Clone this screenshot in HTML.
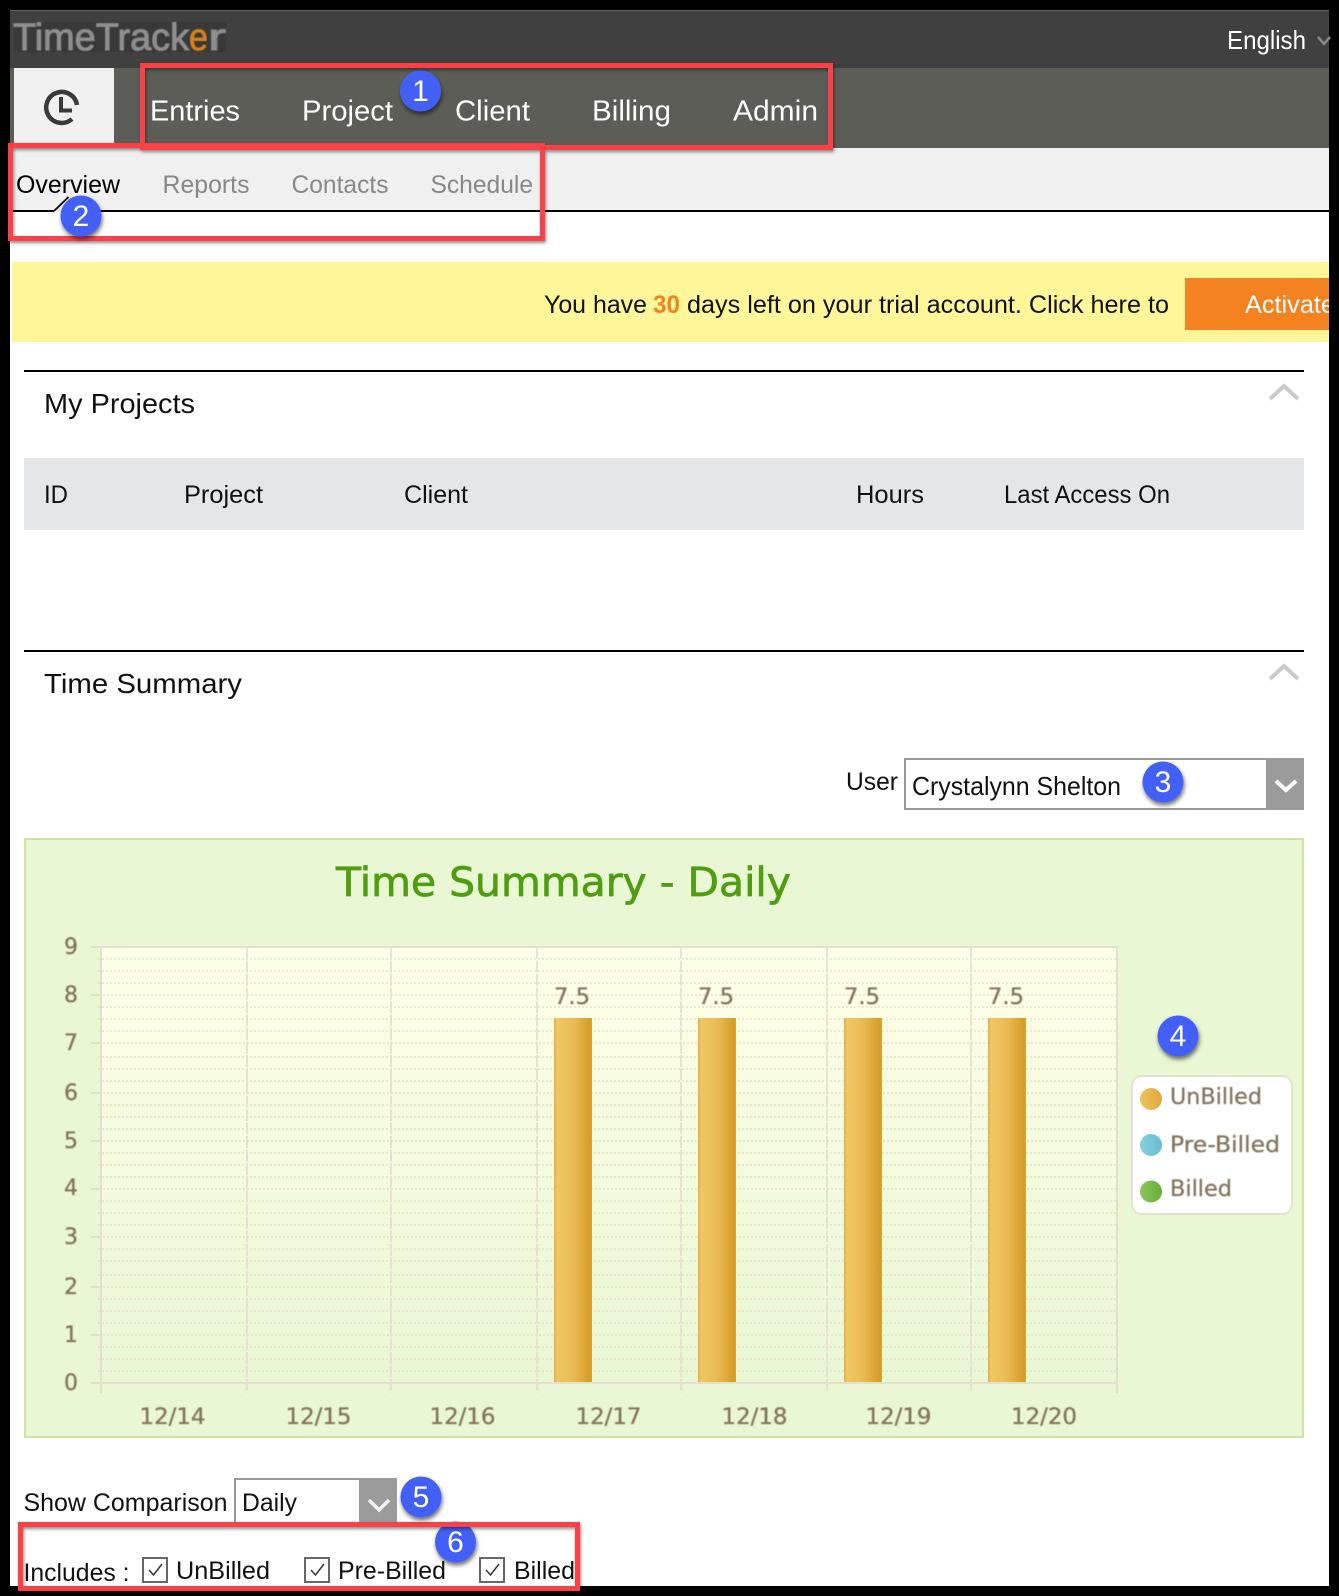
<!DOCTYPE html>
<html>
<head>
<meta charset="utf-8">
<title>TimeTracker</title>
<style>
html,body{margin:0;padding:0;background:#000;width:1339px;height:1596px;overflow:hidden}
svg{display:block}
text{font-family:"Liberation Sans",sans-serif}
.d{font-family:"DejaVu Sans",sans-serif}
.c{fill:#84755b;font-size:22px}
.b{fill:#fff;font-size:30px;text-anchor:middle}
</style>
</head>
<body>
<svg xmlns="http://www.w3.org/2000/svg" width="1339" height="1596" viewBox="0 0 1339 1596">
<defs>
<linearGradient id="plot" x1="0" y1="0" x2="0" y2="1"><stop offset="0" stop-color="#ffffe8"/><stop offset="1" stop-color="#e9f7d4"/></linearGradient>
<linearGradient id="bar" x1="0" y1="0" x2="1" y2="0"><stop offset="0" stop-color="#e2b03c"/><stop offset=".08" stop-color="#f0c765"/><stop offset=".5" stop-color="#ecbc54"/><stop offset=".95" stop-color="#d59c28"/><stop offset="1" stop-color="#dca730"/></linearGradient>
<linearGradient id="l1" x1="0" y1="0" x2="1" y2="0"><stop offset="0" stop-color="#eec25f"/><stop offset="1" stop-color="#dfa83a"/></linearGradient>
<linearGradient id="l2" x1="0" y1="0" x2="1" y2="0"><stop offset="0" stop-color="#84d0e0"/><stop offset="1" stop-color="#6cbcd4"/></linearGradient>
<linearGradient id="l3" x1="0" y1="0" x2="1" y2="0"><stop offset="0" stop-color="#8cc65c"/><stop offset="1" stop-color="#66ae38"/></linearGradient>
<filter id="sh" x="-30%" y="-30%" width="160%" height="170%"><feDropShadow dx="1" dy="3" stdDeviation="2" flood-color="#000" flood-opacity=".55"/></filter>
<filter id="rs" x="-5%" y="-10%" width="110%" height="125%"><feDropShadow dx="1" dy="2" stdDeviation="1.500" flood-color="#000" flood-opacity=".45"/></filter>
<filter id="bl"><feGaussianBlur stdDeviation=".5"/></filter>
<clipPath id="pg"><rect x="10" y="10" width="1319" height="1576"/></clipPath>
</defs>

<rect width="1339" height="1596" fill="#000"/>
<rect x="10" y="10" width="1319" height="1576" fill="#fff"/>

<!-- header -->
<rect x="10" y="10" width="1319" height="58" fill="#404040"/>
<rect x="10" y="10" width="1319" height="1" fill="#666"/>
<rect x="14" y="22" width="212" height="30" fill="#393939"/>
<g filter="url(#bl)">
<text x="13" y="50" font-size="38" fill="#8e8e8e" stroke="#8e8e8e" stroke-width="1" textLength="176" lengthAdjust="spacingAndGlyphs">TimeTrack</text>
<text x="189" y="50" font-size="38" fill="#d9811f" stroke="#d9811f" stroke-width=".8" textLength="19" lengthAdjust="spacingAndGlyphs">e</text>
<text x="208" y="50" font-size="38" fill="#8e8e8e" stroke="#8e8e8e" stroke-width="1" textLength="18" lengthAdjust="spacingAndGlyphs">r</text>
</g>
<text x="1227" y="49" font-size="26" fill="#fff" textLength="79" lengthAdjust="spacingAndGlyphs">English</text>
<polyline points="1318,37 1324,44 1330,37" fill="none" stroke="#8a8a8a" stroke-width="2.500"/>

<!-- nav -->
<rect x="10" y="68" width="1319" height="80" fill="#5c5d57"/>
<rect x="14" y="68" width="100" height="80" fill="#f0f0f0"/>
<path d="M77 105A15.500 15.500 0 1 0 72 119" fill="none" stroke="#3a3a3a" stroke-width="4.500"/>
<path d="M61 97V110.500H72" fill="none" stroke="#3a3a3a" stroke-width="4"/>
<g font-size="29" fill="#fff">
<text x="150" y="120.500" textLength="90" lengthAdjust="spacingAndGlyphs">Entries</text>
<text x="302" y="120.500" textLength="91" lengthAdjust="spacingAndGlyphs">Project</text>
<text x="455" y="120.500" textLength="75" lengthAdjust="spacingAndGlyphs">Client</text>
<text x="592" y="120.500" textLength="79" lengthAdjust="spacingAndGlyphs">Billing</text>
<text x="733" y="120.500" textLength="85" lengthAdjust="spacingAndGlyphs">Admin</text>
</g>

<!-- subnav -->
<rect x="10" y="148" width="1319" height="63" fill="#f0f0f0"/>
<rect x="10" y="210" width="1319" height="2" fill="#000"/>
<rect x="68" y="196" width="30" height="16" fill="#f0f0f0"/>
<rect x="54" y="210" width="16" height="2" fill="#f0f0f0"/>
<path d="M54 211L68.500 197" stroke="#000" stroke-width="1.800" fill="none"/>
<g font-size="25" fill="#888">
<text x="16" y="193" fill="#000" textLength="104" lengthAdjust="spacingAndGlyphs">Overview</text>
<text x="162.500" y="193" textLength="87" lengthAdjust="spacingAndGlyphs">Reports</text>
<text x="291.500" y="193" textLength="97" lengthAdjust="spacingAndGlyphs">Contacts</text>
<text x="430.500" y="193" textLength="102.500" lengthAdjust="spacingAndGlyphs">Schedule</text>
</g>

<!-- trial banner -->
<rect x="12" y="262" width="1317" height="80" fill="#fff599"/>
<rect x="1185" y="278" width="144" height="52" fill="#f58220"/>
<g font-size="25" fill="#111">
<text x="544" y="313" textLength="103" lengthAdjust="spacingAndGlyphs">You have</text>
<text x="653" y="313" fill="#f58220" font-weight="bold" textLength="27" lengthAdjust="spacingAndGlyphs">30</text>
<text x="687" y="313" textLength="482" lengthAdjust="spacingAndGlyphs">days left on your trial account. Click here to</text>
</g>
<text x="1245" y="313" font-size="25" fill="#fff" textLength="90" lengthAdjust="spacingAndGlyphs" clip-path="url(#pg)">Activate</text>

<!-- My projects -->
<rect x="24" y="370" width="1280" height="2" fill="#000"/>
<text x="44" y="413" font-size="28" fill="#111" textLength="151" lengthAdjust="spacingAndGlyphs">My Projects</text>
<polyline points="1270,399 1284,386 1298,399" fill="none" stroke="#cacaca" stroke-width="4"/>
<rect x="24" y="458" width="1280" height="72" fill="#e5e6e8"/>
<g font-size="25" fill="#111">
<text x="44" y="503" textLength="24" lengthAdjust="spacingAndGlyphs">ID</text>
<text x="184" y="503" textLength="79" lengthAdjust="spacingAndGlyphs">Project</text>
<text x="404" y="503" textLength="64" lengthAdjust="spacingAndGlyphs">Client</text>
<text x="856" y="503" textLength="68" lengthAdjust="spacingAndGlyphs">Hours</text>
<text x="1004" y="503" textLength="166" lengthAdjust="spacingAndGlyphs">Last Access On</text>
</g>

<!-- Time summary -->
<rect x="24" y="650" width="1280" height="2" fill="#000"/>
<text x="44" y="693" font-size="28" fill="#111" textLength="198" lengthAdjust="spacingAndGlyphs">Time Summary</text>
<polyline points="1270,679 1284,666 1298,679" fill="none" stroke="#cacaca" stroke-width="4"/>

<text x="846" y="790" font-size="25" fill="#111" textLength="52" lengthAdjust="spacingAndGlyphs">User</text>
<rect x="905" y="759" width="398" height="50" fill="#fff" stroke="#999" stroke-width="2"/>
<rect x="1266" y="758" width="38" height="52" fill="#9b9b9b"/>
<polyline points="1276,781 1286,790 1296,781" fill="none" stroke="#fff" stroke-width="4"/>
<text x="912" y="795" font-size="26" fill="#111" textLength="209" lengthAdjust="spacingAndGlyphs">Crystalynn Shelton</text>

<!-- chart -->
<rect x="25" y="839" width="1278" height="598" fill="#e9f7d4" stroke="#cbe5a6" stroke-width="2"/>
<text class="d" x="336" y="896" font-size="40" fill="#4f9e0f" stroke="#4f9e0f" stroke-width=".7" textLength="455" lengthAdjust="spacingAndGlyphs">Time Summary - Daily</text>
<rect x="101" y="947" width="1016" height="436" fill="url(#plot)"/>
<path d="M98 959H1117M98 971H1117M98 983H1117M98 1007H1117M98 1019H1117M98 1031H1117M98 1057H1117M98 1069H1117M98 1081H1117M98 1105H1117M98 1117H1117M98 1129H1117M98 1153H1117M98 1165H1117M98 1177H1117M98 1201H1117M98 1213H1117M98 1225H1117M98 1249H1117M98 1261H1117M98 1275H1117M98 1299H1117M98 1311H1117M98 1323H1117M98 1347H1117M98 1359H1117M98 1371H1117" fill="none" stroke="#e6dfcc" stroke-width="1.500" stroke-dasharray="2 2"/>
<path d="M91 995H1117M91 1043H1117M91 1093H1117M91 1141H1117M91 1189H1117M91 1237H1117M91 1287H1117M91 1335H1117" fill="none" stroke="#e6dfcc" stroke-width="1.500" stroke-dasharray="2 2"/>
<path d="M91 995H101M91 1043H101M91 1093H101M91 1141H101M91 1189H101M91 1237H101M91 1287H101M91 1335H101" stroke="#e5ddd0" stroke-width="2"/>
<path d="M247 947V1393M391 947V1393M537 947V1393M681 947V1393M827 947V1393M971 947V1393" stroke="#e7dfd3" stroke-width="1.800" stroke-dasharray="12 1.500"/>
<path d="M91 947H1118M91 1383H1118M101 947V1393M1117 947V1393" fill="none" stroke="#e6decf" stroke-width="2"/>
<g fill="url(#bar)">
<rect x="554" y="1018" width="38" height="364"/>
<rect x="698" y="1018" width="38" height="364"/>
<rect x="844" y="1018" width="38" height="364"/>
<rect x="988" y="1018" width="38" height="364"/>
</g>
<g class="d c" filter="url(#bl)" style="stroke:#84755b;stroke-width:.3px">
<text class="d" x="554" y="1004" textLength="36" lengthAdjust="spacingAndGlyphs">7.5</text>
<text class="d" x="698" y="1004" textLength="36" lengthAdjust="spacingAndGlyphs">7.5</text>
<text class="d" x="844" y="1004" textLength="36" lengthAdjust="spacingAndGlyphs">7.5</text>
<text class="d" x="988" y="1004" textLength="36" lengthAdjust="spacingAndGlyphs">7.5</text>
<text class="d" x="64" y="954">9</text>
<text class="d" x="64" y="1002">8</text>
<text class="d" x="64" y="1050">7</text>
<text class="d" x="64" y="1100">6</text>
<text class="d" x="64" y="1148">5</text>
<text class="d" x="64" y="1195">4</text>
<text class="d" x="64" y="1244">3</text>
<text class="d" x="64" y="1294">2</text>
<text class="d" x="64" y="1342">1</text>
<text class="d" x="64" y="1390">0</text>
<text class="d" x="139.500" y="1424" textLength="66" lengthAdjust="spacingAndGlyphs">12/14</text>
<text class="d" x="285.500" y="1424" textLength="66" lengthAdjust="spacingAndGlyphs">12/15</text>
<text class="d" x="429.500" y="1424" textLength="66" lengthAdjust="spacingAndGlyphs">12/16</text>
<text class="d" x="575.500" y="1424" textLength="66" lengthAdjust="spacingAndGlyphs">12/17</text>
<text class="d" x="721.500" y="1424" textLength="66" lengthAdjust="spacingAndGlyphs">12/18</text>
<text class="d" x="865.500" y="1424" textLength="66" lengthAdjust="spacingAndGlyphs">12/19</text>
<text class="d" x="1011" y="1424" textLength="66" lengthAdjust="spacingAndGlyphs">12/20</text>
</g>

<!-- legend -->
<rect x="1132" y="1076" width="160" height="138" rx="10" fill="#fff" stroke="#e7e1d3" stroke-width="2"/>
<circle cx="1151" cy="1099" r="11" fill="url(#l1)"/>
<circle cx="1151" cy="1145" r="11" fill="url(#l2)"/>
<circle cx="1151" cy="1191.500" r="11" fill="url(#l3)"/>
<g class="d c" filter="url(#bl)" style="stroke:#84755b;stroke-width:.3px">
<text class="d" x="1170" y="1104" textLength="92" lengthAdjust="spacingAndGlyphs">UnBilled</text>
<text class="d" x="1170" y="1152" textLength="110" lengthAdjust="spacingAndGlyphs">Pre-Billed</text>
<text class="d" x="1170" y="1196" textLength="62" lengthAdjust="spacingAndGlyphs">Billed</text>
</g>

<!-- comparison -->
<text x="23.500" y="1511" font-size="25" fill="#111" textLength="204" lengthAdjust="spacingAndGlyphs">Show Comparison</text>
<rect x="235" y="1479" width="161" height="50" fill="#fff" stroke="#999" stroke-width="2"/>
<rect x="359" y="1478" width="38" height="52" fill="#9b9b9b"/>
<polyline points="369,1500 379,1510 389,1500" fill="none" stroke="#f2f2f2" stroke-width="3.500"/>
<text x="242" y="1511" font-size="25" fill="#111" textLength="55" lengthAdjust="spacingAndGlyphs">Daily</text>

<rect x="20" y="1524" width="558" height="62" fill="#fff"/>

<!-- includes -->
<g font-size="25" fill="#111">
<text x="23.500" y="1581" textLength="106" lengthAdjust="spacingAndGlyphs">Includes :</text>
<text x="176" y="1579" textLength="94" lengthAdjust="spacingAndGlyphs">UnBilled</text>
<text x="338" y="1579" textLength="108" lengthAdjust="spacingAndGlyphs">Pre-Billed</text>
<text x="514" y="1579" textLength="61" lengthAdjust="spacingAndGlyphs">Billed</text>
</g>
<g fill="#fff" stroke="#666" stroke-width="2">
<rect x="143" y="1558" width="24" height="24"/>
<rect x="305" y="1558" width="24" height="24"/>
<rect x="480" y="1558" width="24" height="24"/>
</g>
<g fill="none" stroke="#333" stroke-width="1.500">
<polyline points="149,1570 153.500,1575 162,1564"/>
<polyline points="311,1570 315.500,1575 324,1564"/>
<polyline points="486,1570 490.500,1575 499,1564"/>
</g>

<!-- badge 6, under its box -->
<g filter="url(#sh)"><circle cx="455.500" cy="1542" r="20.500" fill="#4361f8"/></g>
<text class="b" x="455.500" y="1552">6</text>

<!-- annotation boxes -->
<g fill="none" stroke="#fb4146" stroke-width="5" filter="url(#rs)">
<rect x="142.500" y="65.500" width="688" height="82"/>
<rect x="10.500" y="145.500" width="532" height="93"/>
<rect x="20.500" y="1524.500" width="557" height="64"/>
</g>

<!-- badges -->
<g fill="#4361f8" filter="url(#sh)">
<circle cx="420.500" cy="91" r="20.500"/>
<circle cx="81" cy="216" r="20.500"/>
<circle cx="1163" cy="782" r="20.500"/>
<circle cx="1178" cy="1036" r="20.500"/>
<circle cx="421" cy="1497" r="20.500"/>
</g>
<text class="b" x="420.500" y="101">1</text>
<text class="b" x="81" y="226">2</text>
<text class="b" x="1163" y="792">3</text>
<text class="b" x="1178" y="1046">4</text>
<text class="b" x="421" y="1507">5</text>
</svg>
</body>
</html>
